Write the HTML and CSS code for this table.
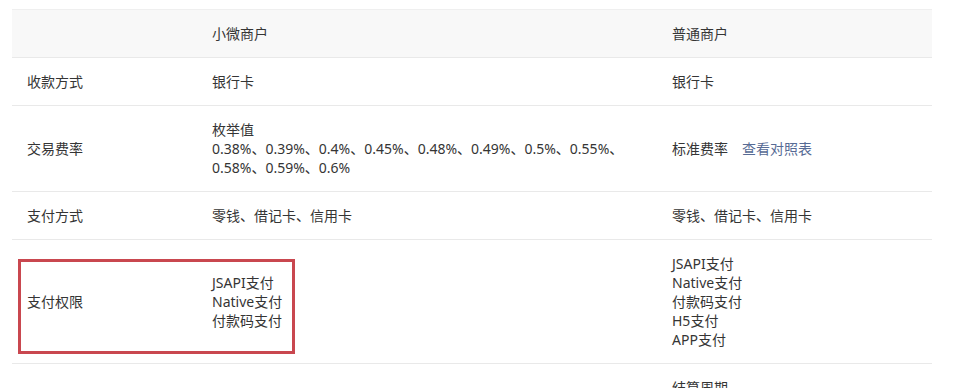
FILE: index.html
```html
<!DOCTYPE html>
<html lang="zh-CN">
<head>
<meta charset="utf-8">
<title>小微商户与普通商户对比</title>
<link rel="stylesheet" href="styles.css">
</head>
<body>
<div class="page">
  <table class="compare">
    <colgroup>
      <col class="c1"><col class="c2"><col class="c3">
    </colgroup>
    <thead>
      <tr><th></th><th>小微商户</th><th>普通商户</th></tr>
    </thead>
    <tbody>
      <tr><td>收款方式</td><td>银行卡</td><td>银行卡</td></tr>
      <tr>
        <td>交易费率</td>
        <td>枚举值<br>0.38%、0.39%、0.4%、0.45%、0.48%、0.49%、0.5%、0.55%、0.58%、0.59%、0.6%</td>
        <td>标准费率<a class="link" href="#">查看对照表</a></td>
      </tr>
      <tr><td>支付方式</td><td>零钱、借记卡、信用卡</td><td>零钱、借记卡、信用卡</td></tr>
      <tr>
        <td>支付权限</td>
        <td>JSAPI支付<br>Native支付<br>付款码支付</td>
        <td>JSAPI支付<br>Native支付<br>付款码支付<br>H5支付<br>APP支付</td>
      </tr>
      <tr>
        <td>结算周期</td>
        <td>T+1</td>
        <td>结算周期<br>T+1<br>节假日顺延<br>自动提现<br>至银行卡</td>
      </tr>
    </tbody>
  </table>
  <div class="highlight"></div>
</div>
</body>
</html>
```

FILE: styles.css
```css
html, body {
  margin: 0;
  padding: 0;
  background: #ffffff;
}
body {
  font-family: "Noto Sans", "Noto Sans CJK SC", sans-serif;
  font-size: 14px;
  color: #353535;
  overflow: hidden;
  height: 388px;
}
.page {
  position: relative;
  padding: 9px 0 0 12px;
}
.compare {
  width: 920px;
  border-collapse: collapse;
  table-layout: fixed;
  border-top: 1px solid #efefef;
}
.c1 { width: 185px; }
.c2 { width: 460px; }
.c3 { width: 275px; }
.compare th,
.compare td {
  text-align: left;
  font-weight: normal;
  vertical-align: middle;
  line-height: 19px;
  padding: 14px 15px 14px 15px;
  border-bottom: 1px solid #e9e9e9;
}
.compare thead th {
  background: #f8f8f8;
}
.link {
  color: #576b95;
  text-decoration: none;
  margin-left: 14px;
}
.highlight {
  position: absolute;
  left: 18px;
  top: 259px;
  width: 271px;
  height: 89px;
  border: 3px solid #c9474f;
}
```
